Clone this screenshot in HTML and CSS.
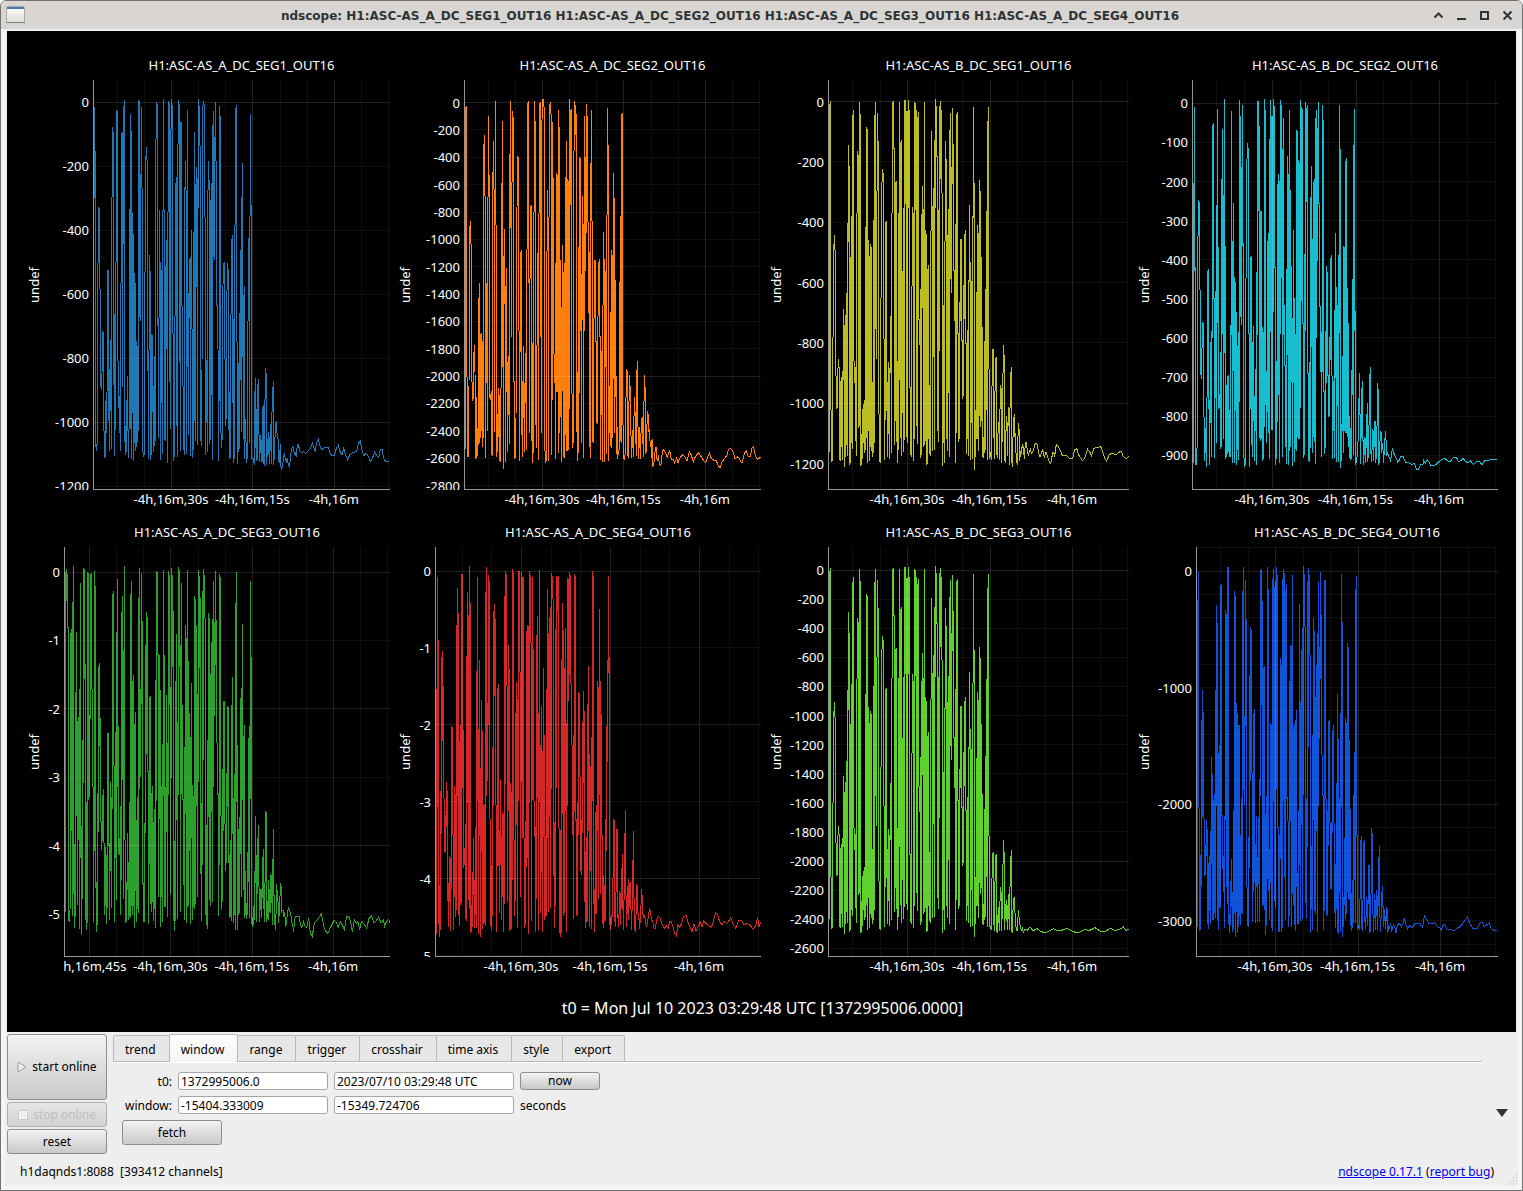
FILE: index.html
```html
<!DOCTYPE html>
<html lang="en">
<head>
<meta charset="UTF-8" />
<meta name="viewport" content="width=device-width, initial-scale=1" />
<title>ndscope</title>
<link rel="stylesheet" href="styles.css">
</head>
<body>
<div class="window">
  <header class="titlebar">
    <svg class="app-icon" width="22" height="20" viewBox="0 0 22 20">
      <defs>
        <linearGradient id="sheet" x1="0" y1="0" x2="0" y2="1">
          <stop offset="0" stop-color="#fff" />
          <stop offset="1" stop-color="#dcdeda" />
        </linearGradient>
      </defs>
      <rect x="1.5" y="1.5" width="18" height="16" rx="1" fill="url(#sheet)" stroke="#a9aaa6" />
      <rect x="1" y="17" width="19" height="1" fill="#7f807c" />
      <rect x="2" y="2" width="17" height="2" fill="#5078b0" />
    </svg>
    <h1>ndscope: H1:ASC-AS_A_DC_SEG1_OUT16 H1:ASC-AS_A_DC_SEG2_OUT16 H1:ASC-AS_A_DC_SEG3_OUT16 H1:ASC-AS_A_DC_SEG4_OUT16</h1>
    <div class="window-buttons">
      <button aria-label="Shade"><svg width="11" height="11" viewBox="0 0 11 11"><path d="M1.5 7.5L5.500 3.500L9.500 7.500" /></svg></button>
      <button aria-label="Minimize"><svg width="11" height="11" viewBox="0 0 11 11"><path d="M1 9H10" /></svg></button>
      <button aria-label="Maximize"><svg width="11" height="11" viewBox="0 0 11 11"><path d="M2 2H9V9H2Z" /></svg></button>
      <button aria-label="Close"><svg width="11" height="11" viewBox="0 0 11 11"><path d="M1.500 1.500L9.500 9.500M9.500 1.500L1.500 9.500" /></svg></button>
    </div>
  </header>

  <main class="scope">
    <div class="plots" id="plots"></div>
    <p class="t0">t0 = Mon Jul 10 2023 03:29:48 UTC [1372995006.0000]</p>
  </main>

  <section class="controls">
    <div class="run-buttons">
      <button class="btn start"><svg width="10" height="12" viewBox="0 0 10 12"><path d="M1 1L9 6L1 11Z" fill="#eee" stroke="#a0a0a0" /></svg>start online</button>
      <button class="btn" disabled><svg width="10" height="10" viewBox="0 0 10 10"><rect x="1" y="1" width="8" height="8" fill="#eee" stroke="#f8f8f8" stroke-width="2" /><path d="M.5 9.500V.5H9.500V9.500Z" fill="none" stroke="#c8c8c8" /></svg>stop online</button>
      <button class="btn">reset</button>
    </div>

    <div class="panel">
      <nav class="tabs">
        <button>trend</button>
        <button class="active">window</button>
        <button>range</button>
        <button>trigger</button>
        <button>crosshair</button>
        <button>time axis</button>
        <button>style</button>
        <button>export</button>
      </nav>
      <form class="window-form" onsubmit="return false">
        <label for="t0Gps">t0:</label>
        <input type="text" id="t0Gps" value="1372995006.0" />
        <input type="text" id="t0Date" aria-label="t0 date" value="2023/07/10 03:29:48 UTC" />
        <button type="button" class="btn">now</button>

        <label for="winStart">window:</label>
        <input type="text" id="winStart" value="-15404.333009" />
        <input type="text" id="winEnd" aria-label="window end" value="-15349.724706" />
        <span>seconds</span>
      </form>
      <button class="btn fetch">fetch</button>
    </div>

    <button class="collapse" aria-label="Hide controls"><svg width="12" height="8" viewBox="0 0 12 8"><path d="M0 0H12L6 8Z" fill="#2e3436" /></svg></button>
  </section>

  <footer class="statusbar">
    <span class="server">h1daqnds1:8088&nbsp; [393412 channels]</span>
    <span><a href="#">ndscope 0.17.1</a> (<a href="#">report bug</a>)</span>
    <svg class="grip" width="12" height="12" viewBox="0 0 12 12"><path d="M10 1h1M7 4h1M10 4h1M4 7h1M7 7h1M10 7h1M1 10h1M4 10h1M7 10h1M10 10h1" stroke="#b4b4b4" /></svg>
  </footer>
</div>
<script src="scope.js"></script>
</body>
</html>
```
FILE: styles.css
```css
* {
  box-sizing: border-box;
}
body {
  margin: 0;
  background: #fff;
  font-family: "Noto Sans", sans-serif;
  font-size: 12px;
  line-height: 16px;
  color: #000;
}
button,
input {
  font: inherit;
  color: inherit;
}
.window {
  min-height: 100vh;
  display: flex;
  flex-direction: column;
  border: 1px solid #757371;
  border-radius: 6px 6px 0 0;
  background: #eee;
  box-shadow: inset 0 0 0 4px #f6f5f4;
}

/* title bar */
.titlebar {
  height: 28px;
  display: flex;
  align-items: center;
  padding: 0 9px 0 4px;
  background: #d9d5d2;
  border-radius: 5px 5px 0 0;
}
.titlebar h1 {
  flex: 1;
  margin: 0;
  padding-top: 2px;
  font-family: "DejaVu Sans", sans-serif;
  font-size: 12px;
  font-weight: 700;
  text-align: center;
  white-space: nowrap;
  color: #2e3436;
}
.window-buttons {
  display: flex;
  gap: 12px;
}
.window-buttons button {
  display: flex;
  padding: 0;
  border: none;
  background: none;
}
.window-buttons path {
  fill: none;
  stroke: #2e3436;
  stroke-width: 2;
}

/* plots */
.scope {
  flex: 1;
  display: flex;
  flex-direction: column;
  margin: 2px 6px 0;
  padding: 26px 18px 0 20px;
  background: #000;
  color: #fff;
}
.plots {
  flex: 1;
  display: grid;
  grid-template-columns: 363fr 363fr 360fr 361fr;
  grid-template-rows: 1fr 1fr;
  gap: 12px 8px;
}
.plot {
  display: grid;
  grid-template-columns: auto 1fr;
  grid-template-rows: 23px 1fr 22px;
  min-width: 0;
  margin: 0;
  font-size: 13px;
  line-height: 18px;
}
.plot figcaption {
  grid-column: 2;
  line-height: 16px;
  text-align: center;
  white-space: nowrap;
}
.yaxis {
  position: relative;
  grid-column: 1;
  overflow: hidden;
}
.yaxis .unit {
  position: absolute;
  left: 0;
  top: 50%;
  line-height: 14px;
  writing-mode: vertical-rl;
  transform: translateY(-50%) rotate(180deg);
}
.yaxis .tick {
  position: absolute;
  right: 4px;
  transform: translateY(-50%);
}
.xaxis {
  position: relative;
  grid-column: 2;
  overflow: hidden;
}
.xaxis .tick {
  position: absolute;
  top: 0;
  transform: translateX(-50%);
  white-space: nowrap;
}
.canvas {
  position: relative;
  grid-column: 2;
}
.canvas svg {
  position: absolute;
  width: 100%;
  height: 100%;
}
.canvas path {
  fill: none;
  stroke-width: 1px;
  vector-effect: non-scaling-stroke;
  shape-rendering: crispEdges;
}
.grid-minor {
  stroke: rgba(255, 255, 255, 0.06);
}
.grid-major {
  stroke: rgba(255, 255, 255, 0.13);
}
.axis-line {
  stroke: #969696;
}
.t0 {
  margin: 0;
  padding: 17px 0 12px;
  font-size: 16px;
  line-height: 24px;
  text-align: center;
}

/* controls */
.controls {
  display: flex;
  padding: 2px 0 1px 6px;
}
.btn {
  display: flex;
  align-items: center;
  justify-content: center;
  padding: 0;
  border: 1px solid #8e8e8e;
  border-radius: 3px;
  background: linear-gradient(#f2f2f2, #c9c9c9);
}
.btn:disabled {
  border-color: #b0b0b0;
  color: #bebebe;
  background: linear-gradient(#e6e6e6, #d2d2d2);
}
.run-buttons {
  display: flex;
  flex-direction: column;
  gap: 2px;
  width: 100px;
}
.run-buttons .btn {
  height: 25px;
  gap: 5px;
}
.run-buttons .start {
  height: 66px;
}
.panel {
  flex: 1;
  margin-left: 6px;
}
.tabs {
  display: flex;
  align-items: flex-end;
  height: 28px;
  border-bottom: 1px solid #b9b9b9;
  box-shadow: 0 1px #fff;
}
.tabs button {
  height: 26px;
  margin-left: -1px;
  padding: 2px 13px 0 11px;
  border: 1px solid #b9b9b9;
  border-bottom: none;
  border-radius: 2px 2px 0 0;
  background: #e7e7e7;
}
.tabs button:first-child {
  margin-left: 0;
}
.tabs .active {
  height: 28px;
  margin-bottom: -1px;
  background: linear-gradient(#fff, #f4f4f4);
}
.window-form {
  display: grid;
  grid-template-columns: 59px 150px 180px 80px;
  gap: 6px;
  margin-top: 10px;
  line-height: 20px;
}
.window-form label {
  height: 18px;
  text-align: right;
}
.window-form input {
  width: 100%;
  height: 18px;
  padding: 1px 2px 0;
  border: 1px solid #a6a6a6;
  border-radius: 3px;
  background: #fff;
}
.window-form span {
  height: 18px;
}
.window-form .btn {
  height: 18px;
}
.fetch {
  width: 100px;
  height: 25px;
  margin: 6px 0 0 9px;
}
.collapse {
  align-self: flex-end;
  display: flex;
  align-items: center;
  width: 40px;
  height: 82px;
  padding: 0 14px;
  border: none;
  background: none;
}

/* status bar */
.statusbar {
  position: relative;
  display: flex;
  justify-content: space-between;
  padding: 9px 28px 10px 19px;
}
.statusbar a {
  color: #0000ee;
}
.grip {
  position: absolute;
  right: 4px;
  bottom: 4px;
}
```
FILE: scope.js
```js
// each trace is a list of x,y points on a grid with 3 units per pixel
// view: left and top of that grid, then its width
const HEIGHT = 1230;

const bodySegB = '118,1115 118,94 121,64 122,905 125,1145 127,1138 128,1020 130,548 133,466 136,532 137,834 140,984 143,980 143,895 145,838 148,874 149,1140 152,904 152,1142 155,892 155,1100 158,874 158,1140 160,688 163,756 163,1160 166,706 166,1130 169,690 169,1095 172,430 172,1127 175,196 178,286 178,1155 181,1145 181,535 184,528 184,1090 187,106 187,1106 190,91 191,774 193,908 196,862 196,990 199,1127 199,802 202,214 205,232 205,1043 208,67 208,1037 211,102 211,1157 214,1154 214,1062 217,1136 217,1020 220,972 220,1090 223,960 223,1118 226,934 226,1110 229,142 229,1074 232,148 232,1148 235,481 235,1052 238,528 238,1142 241,493 241,1100 244,502 244,1112 247,906 247,1130 250,898 250,1120 253,106 253,1090 256,67 256,748 259,520 259,838 262,100 265,222 265,1000 268,1003 268,1139 271,1148 272,954 274,390 277,268 280,286 280,776 283,778 283,1139 286,962 286,433 289,424 289,992 292,906 292,1130 295,847 295,1061 298,864 298,1136 301,760 304,684 304,1118 307,67 310,66 310,204 313,206 313,1094 316,306 316,1022 319,303 319,1085 322,844 322,1148 325,865 325,1109 328,67 328,900 331,186 331,1073 334,180 334,1127 337,572 337,1000 340,592 340,1115 343,60 343,1079 346,61 349,110 349,1070 352,94 352,1088 355,61 355,94 358,92 358,922 361,924 361,1124 364,915 364,1130 367,381 370,424 370,1142 373,67 373,1076 376,68 376,120 379,90 379,1038 382,110 382,1092 385,97 385,718 388,718 388,794 391,796 391,1133 394,403 394,1124 397,319 397,684 400,433 400,1100 403,67 403,1096 406,451 406,1082 409,463 409,1154 412,568 412,1151 415,556 415,1076 418,916 418,1121 421,904 421,1127 424,154 427,487 427,1112 430,325 430,832 433,180 433,1109 436,58 436,182 439,78 439,230 442,230 442,1054 445,820 445,1085 448,78 448,812 451,64 451,196 454,91 454,338 457,340 457,1157 460,936 460,1088 463,484 463,1148 466,184 466,484 469,238 469,1076 472,464 472,1112 475,388 475,940 478,150 478,1130 481,100 481,598 484,312 484,638 487,84 487,312 490,192 490,570 493,572 493,722 496,724 496,1148 499,102 499,1058 502,97 502,760 505,762 505,1085 508,726 508,1078 511,478 511,724 514,476 514,780 517,782 517,956 520,714 520,948 523,463 523,716 526,450 526,790 529,792 529,1121 532,970 532,1076 535,600 535,1127 538,375 538,600 541,547 541,1139 544,766 544,1028 547,408 547,1136 550,82 550,408 553,310 553,1169 556,1060 556,1130 559,924 559,1076 562,436 562,1078 565,460 565,1112 568,301 568,1008 571,334 571,1040 574,532 574,1022 577,742 577,1130 580,1070 580,1133 583,1103 583,1120 586,628 586,1110 589,518 589,990 592,124 592,1139 595,82 595,866 598,868 598,1136 ';

const plots = [
  {
    title: 'H1:ASC-AS_A_DC_SEG1_OUT16', color: '#1f77b4', axis: 66,
    view: [99, 0, 891], x: [78, 81.4, ['-4h,16m,30s', '-4h,16m,15s', '-4h,16m']],
    y: { zero: 22, step: 64, unit: -200, count: 7, major: 5 },
    trace: '101,668 103,80 106,273 106,1076 109,1112 112,1085 113,640 116,381 119,388 120,626 121,900 124,930 126,880 128,756 130,757 131,1008 134,1132 137,1130 137,963 139,1060 141,942 144,571 146,1022 149,867 149,1112 152,780 154,1108 155,588 157,141 160,162 161,914 163,702 163,1128 166,620 167,1050 169,90 173,98 173,768 176,985 178,948 181,1112 182,855 185,162 187,155 188,920 190,114 193,60 194,1067 197,1124 199,960 200,1115 202,888 205,1133 208,1007 211,102 212,1046 214,153 214,1136 217,400 218,1000 220,462 220,1142 223,578 223,1090 226,609 226,1112 229,783 229,1100 232,798 232,1085 235,1040 235,60 238,66 239,700 241,722 244,80 247,441 247,1086 250,1130 253,1124 254,750 257,258 259,201 262,258 263,872 266,848 266,1136 268,525 271,594 271,1139 275,762 275,1124 278,765 280,1115 283,828 283,1098 286,1076 287,237 290,66 292,76 293,558 296,1073 298,390 301,618 301,1139 304,748 304,970 307,390 307,1122 310,58 313,552 313,1076 316,1082 317,648 319,480 319,806 322,513 322,1148 325,64 328,70 329,752 331,1048 331,336 334,57 337,84 338,356 340,1142 343,1062 344,1130 346,342 349,291 349,850 352,1130 353,342 355,60 358,76 359,560 361,1112 363,126 364,675 367,680 368,824 371,1094 373,1125 373,484 376,243 379,370 379,1122 382,90 382,860 385,640 385,1065 388,552 391,530 391,1127 394,450 397,888 397,1134 400,978 400,1110 403,155 403,1022 406,312 406,1082 409,261 409,622 412,294 412,1095 415,57 418,87 421,250 421,1055 424,1098 426,905 427,100 430,63 433,75 433,410 436,412 436,1124 439,840 442,1115 442,520 445,243 448,327 448,1091 451,360 451,1080 454,309 454,945 457,135 457,1139 460,93 460,530 463,170 463,540 466,66 469,327 469,675 472,676 475,870 475,1142 478,880 478,78 481,122 481,968 484,1104 487,1070 488,685 490,550 493,549 493,600 496,950 496,1037 499,1008 500,718 502,549 505,577 505,1050 508,936 508,1136 511,908 511,1134 514,503 517,465 517,970 520,716 520,1148 523,700 523,1137 526,107 529,75 529,785 532,787 532,1151 535,849 535,1115 538,835 538,1107 541,510 541,900 544,350 544,1055 547,249 547,830 550,645 550,1076 553,618 553,1137 556,1017 559,1118 559,1148 562,1130 562,972 565,606 568,412 568,1088 571,102 574,504 574,1137 577,1136 580,1136 583,1154 583,1012 586,894 586,1014 589,1144 592,912 592,1139 595,897 598,1145 601,1064 604,1145 604,1080 607,1145 607,996 610,976 610,1142 613,1157 616,864 619,888 619,1154 622,1120 625,1056 628,1151 631,1032 634,1151 634,1074 637,960 640,903 640,1154 643,1130 643,1140 646,1040 649,1022 652,1075 655,1078 655,1142 658,1145 661,1092 661,1150 664,1168 667,1160 670,1140 673,1120 676,1135 679,1145 682,1133 685,1155 688,1160 691,1140 694,1110 697,1100 700,1103 703,1123 706,1120 709,1130 712,1093 716,1095 718,1110 724,1118 730,1115 736,1120 742,1115 748,1110 754,1100 757,1090 760,1098 766,1117 769,1090 775,1078 778,1090 784,1110 790,1105 796,1102 805,1103 811,1122 817,1127 823,1126 829,1105 835,1096 841,1118 846,1125 851,1105 857,1125 863,1139 869,1125 878,1117 890,1115 895,1090 901,1084 905,1105 911,1127 919,1120 926,1130 931,1145 937,1135 944,1117 952,1130 956,1132 961,1110 966,1107 971,1135 976,1143 986,1144'
  },
  {
    title: 'H1:ASC-AS_A_DC_SEG2_OUT16', color: '#ff7f0e', axis: 66,
    view: [102, 0, 891], x: [78, 81.4, ['-4h,16m,30s', '-4h,16m,15s', '-4h,16m']],
    y: { zero: 22.6, step: 27.35, unit: -200, count: 15, major: 10 },
    trace: '106,1108 107,82 110,80 111,890 112,1130 115,1130 117,940 118,468 121,424 124,526 125,842 127,962 130,955 131,838 133,796 135,876 137,1136 139,1130 140,950 142,1127 144,1112 146,700 148,609 150,1088 151,774 154,758 155,1052 157,784 157,1100 160,1060 161,220 163,166 166,436 166,1133 169,608 172,1052 173,618 175,108 178,370 179,948 181,960 184,932 184,1120 187,1127 188,380 190,184 193,396 193,1055 196,64 199,610 200,1130 203,1092 205,925 208,1142 208,945 211,1010 212,1145 215,520 217,124 217,860 220,528 220,1168 223,448 226,700 226,1145 229,564 232,1115 232,880 235,828 238,1091 239,400 241,64 243,444 244,770 247,94 250,118 250,904 253,906 255,1136 258,1025 260,460 263,231 266,235 266,546 269,1142 271,532 274,510 274,928 277,1130 280,798 283,1115 284,956 287,820 289,1109 290,750 293,76 295,64 296,146 298,1060 301,381 304,378 304,1082 307,790 307,1148 310,804 310,1120 313,64 316,150 316,1034 319,960 320,1103 322,519 325,552 325,1139 328,72 331,66 331,180 334,1058 335,182 337,60 340,58 343,92 343,1036 346,1148 349,1139 350,720 352,330 355,450 355,1142 358,76 361,70 364,118 364,1124 367,126 367,960 370,294 372,822 376,936 376,1136 379,280 379,936 382,284 382,936 385,90 385,1120 388,142 388,1058 391,540 391,1010 394,680 394,1145 397,496 397,932 400,576 400,1130 403,966 403,1133 406,291 406,1066 409,184 409,1112 412,298 412,1112 415,303 415,1109 418,58 418,988 421,90 421,150 424,88 425,768 427,1103 430,1080 431,386 433,64 436,82 436,166 439,102 439,1055 442,876 442,1142 445,897 445,1118 448,232 448,940 451,234 451,752 454,720 454,1088 457,348 457,720 460,490 460,1133 463,108 463,752 466,326 466,574 469,72 469,458 472,108 475,576 475,698 478,700 478,1100 481,250 481,1133 484,90 487,578 487,1085 490,880 490,1088 493,541 496,541 496,784 499,786 499,1028 502,1030 505,560 508,538 508,768 511,770 511,1139 514,942 517,754 517,1145 520,456 523,576 523,1145 526,728 529,502 529,1121 532,84 535,246 535,1142 538,1020 541,870 541,1098 544,510 544,1103 547,540 547,1073 550,280 550,898 553,354 553,1058 556,600 556,952 559,888 559,1121 562,1040 562,1136 565,1118 568,1105 568,622 571,598 571,1082 574,102 574,1090 577,100 577,1034 580,1036 580,1130 583,1139 586,1120 589,870 592,874 592,1118 595,1133 598,886 601,934 604,1133 607,1070 607,1050 610,1130 613,952 616,1016 619,1127 619,924 622,844 625,1136 628,1040 631,1136 634,1022 637,1010 640,1130 643,886 646,938 646,1121 649,1112 652,994 655,1006 655,1055 658,1048 661,1100 664,1080 664,1133 667,1078 667,1160 670,1155 673,1140 676,1103 679,1103 679,1130 682,1140 685,1132 688,1150 691,1157 694,1150 697,1115 700,1108 706,1118 712,1132 718,1112 721,1120 724,1140 730,1138 734,1148 740,1135 744,1148 752,1130 758,1125 765,1130 771,1143 778,1115 784,1125 790,1147 796,1130 805,1118 812,1128 820,1140 827,1148 833,1130 838,1120 844,1135 850,1140 858,1140 864,1155 870,1163 876,1145 884,1135 890,1127 896,1108 902,1105 909,1115 915,1136 924,1130 930,1140 936,1150 943,1120 949,1113 955,1130 961,1130 966,1103 971,1100 976,1128 983,1138 992,1132'
  },
  {
    title: 'H1:ASC-AS_B_DC_SEG1_OUT16', color: '#bcbd22', axis: 59,
    view: [114, 0, 903], x: [79, 82.5, ['-4h,16m,30s', '-4h,16m,15s', '-4h,16m']],
    y: { zero: 21.5, step: 60.35, unit: -200, count: 7, major: 5 },
    trace: bodySegB + '601,1115 604,1139 607,812 610,806 610,1070 613,1076 613,1136 616,838 619,835 619,1106 622,1133 625,1025 628,1066 628,1139 631,916 634,928 634,1148 637,1055 640,794 643,838 643,1142 646,1050 646,1148 649,1008 652,1072 652,1127 655,980 658,1064 658,1154 661,906 664,862 664,1148 667,1106 667,1160 670,1028 673,1003 673,1070 676,1060 679,1145 682,1150 685,1028 688,1055 688,1142 691,1112 691,1130 694,1118 697,1095 700,1100 703,1138 706,1088 709,1088 712,1110 715,1128 721,1105 724,1120 730,1112 736,1090 742,1092 746,1120 750,1132 755,1115 758,1110 763,1132 768,1115 773,1130 778,1145 782,1150 786,1130 789,1115 794,1128 799,1093 805,1100 811,1112 817,1126 830,1127 838,1136 848,1135 853,1110 860,1105 866,1125 878,1142 884,1135 893,1108 899,1115 904,1127 912,1105 920,1102 932,1100 938,1115 944,1135 950,1143 957,1125 965,1120 978,1124 990,1115 995,1115 1000,1130 1008,1137 1016,1130'
  },
  {
    title: 'H1:ASC-AS_B_DC_SEG2_OUT16', color: '#17becf', axis: 55,
    view: [126, 0, 918], x: [80, 83.5, ['-4h,16m,30s', '-4h,16m,15s', '-4h,16m']],
    y: { zero: 23.3, step: 39.1, unit: -100, count: 10, major: 10 },
    trace: '131,310 131,1148 133,80 134,560 137,564 137,1154 140,1154 142,1060 143,525 146,361 149,378 149,630 152,632 152,878 155,898 155,845 158,726 161,732 161,1010 164,1012 164,1142 167,1075 170,990 170,1160 173,574 176,570 176,988 179,960 179,1154 182,804 185,752 185,1130 188,138 191,130 191,655 194,656 194,1133 197,634 197,920 200,374 200,1088 203,88 203,500 206,504 206,986 209,942 209,985 212,944 212,1106 215,298 215,1100 218,147 218,346 221,348 221,1076 224,58 224,820 227,498 227,1136 230,915 230,1130 233,887 233,1121 236,886 236,1115 239,1010 239,1130 242,736 242,1130 245,94 245,735 248,484 248,1148 251,370 251,696 254,592 254,1150 257,606 257,994 260,697 260,1154 263,798 263,1109 266,852 266,1139 269,61 269,966 272,108 272,712 275,262 275,735 278,76 278,488 281,490 281,1118 284,1160 287,1148 287,774 290,262 293,190 296,228 296,760 299,762 299,1160 302,531 302,988 305,528 305,1094 308,786 308,1130 311,738 311,1024 314,948 314,1142 317,868 317,1052 320,576 320,1154 323,64 323,576 326,64 326,138 329,138 329,1073 332,394 332,1082 335,394 335,1078 338,742 338,1142 341,756 341,1136 344,58 344,1042 347,91 347,974 350,976 350,1088 353,484 353,996 356,460 356,1058 359,178 359,1136 362,61 362,178 365,108 365,1051 368,108 368,1050 371,58 371,108 374,78 374,562 377,564 377,1154 380,1026 380,1136 383,312 383,1026 386,283 386,944 389,304 389,1148 392,60 392,304 395,76 395,594 398,208 398,1130 401,114 401,676 404,678 404,856 407,858 407,1100 410,568 410,1151 413,229 413,568 416,283 416,1154 419,91 419,1112 422,331 422,1100 425,558 425,892 428,714 428,1157 431,451 431,714 434,654 434,1145 437,984 437,1106 440,151 440,1112 443,153 443,1070 446,240 446,1076 449,249 449,1078 452,61 452,985 455,80 455,124 458,88 458,730 461,732 461,1133 464,522 464,1124 467,67 467,520 470,85 470,134 473,76 473,880 476,882 476,1142 479,847 479,1145 482,352 482,1103 485,259 485,476 488,478 488,1118 491,306 491,1070 494,298 494,1085 497,115 497,1151 500,91 500,538 503,145 503,542 506,67 506,370 509,370 509,678 512,678 512,876 515,878 515,1130 518,76 518,876 521,120 521,934 524,936 524,1121 527,754 527,1103 530,558 530,754 533,576 533,886 536,888 536,1010 539,772 539,1008 542,534 542,770 545,526 545,888 548,890 548,1136 551,904 551,1050 554,690 554,1133 557,460 557,690 560,622 560,1145 563,676 563,968 566,526 566,1145 569,76 569,526 572,208 572,1163 575,1052 575,1142 578,828 578,1052 581,499 581,1118 584,502 584,1052 587,243 587,1058 590,235 590,1058 593,624 593,1070 596,730 596,1100 599,1008 599,1133 602,1108 602,1139 605,870 605,1136 608,598 608,868 611,196 611,1124 614,88 614,692 617,694 617,1154 620,1140 623,1112 623,1130 626,994 629,880 629,1003 632,1004 632,1151 635,936 638,904 638,1080 641,1080 641,1154 644,1072 647,1078 647,1148 650,1020 653,970 653,1145 656,1112 659,892 662,862 662,1109 665,1146 668,1048 671,1064 671,1142 674,1024 677,1024 677,1150 680,1110 683,910 686,960 686,1154 689,1138 689,1100 692,1052 695,1064 695,1118 698,1090 701,1148 704,1086 707,1054 710,1128 713,1120 719,1135 722,1142 727,1108 731,1118 737,1132 743,1145 748,1140 752,1130 760,1130 766,1147 775,1147 785,1154 793,1150 799,1168 805,1168 812,1154 820,1152 821,1141 826,1150 832,1140 838,1148 842,1157 850,1158 858,1153 866,1145 874,1140 884,1135 893,1143 900,1145 910,1132 920,1133 925,1145 932,1142 939,1135 947,1145 955,1148 962,1143 970,1153 979,1146 987,1143 996,1154 1003,1143 1014,1142 1022,1138 1040,1138'
  },
  {
    title: 'H1:ASC-AS_A_DC_SEG3_OUT16', color: '#2ca02c', axis: 37,
    view: [132, 81, 978], x: [25, 81.4, ['-4h,16m,45s', '-4h,16m,30s', '-4h,16m,15s', '-4h,16m']],
    y: { zero: 25, step: 68.4, unit: -1, count: 6, major: 2 },
    trace: '137,1175 137,162 140,147 140,244 143,162 143,322 146,325 146,1202 149,1204 152,1103 152,348 155,327 155,932 158,246 158,1187 161,138 161,1120 164,1122 164,1223 167,516 167,1190 170,336 170,602 173,604 173,1154 176,592 176,960 179,508 179,1226 182,189 182,1014 185,918 185,1244 188,660 188,1136 191,144 191,658 194,148 194,432 197,432 197,1200 200,990 200,1229 203,156 203,1208 206,160 206,720 209,586 209,832 212,162 212,584 215,160 215,506 218,508 218,800 221,802 221,1205 224,153 224,992 227,198 227,1102 230,1105 230,1235 233,820 233,1216 236,438 236,818 239,430 239,594 242,596 242,904 245,906 245,990 248,826 248,962 251,808 251,968 254,970 254,1184 257,980 257,1157 260,1006 260,1211 263,640 263,1163 266,640 266,970 269,972 269,1199 272,786 272,1013 275,868 275,1163 278,222 278,866 281,213 281,738 284,740 284,1205 287,636 287,1013 290,336 290,1139 293,178 293,618 296,620 296,1002 299,954 299,1004 302,986 302,1184 305,276 305,1079 308,228 308,674 311,390 311,1136 314,138 314,960 317,962 317,1208 320,1085 320,1205 323,940 323,1085 326,1026 326,1199 329,1038 329,1187 332,222 332,1193 335,184 335,1157 338,484 338,1184 341,466 341,1157 344,612 344,1223 347,576 347,1112 350,900 350,1205 353,858 353,1166 356,234 356,1178 359,144 359,626 362,506 362,770 365,160 365,506 368,304 368,1091 371,1092 371,1205 374,942 374,1205 377,376 377,940 380,276 380,376 383,290 383,755 386,756 386,1211 389,530 389,1031 392,528 392,1151 395,820 395,1175 398,798 398,1145 401,906 401,1202 404,867 404,1166 407,480 407,1223 410,153 410,480 413,156 413,404 416,405 416,1130 419,406 419,896 422,510 422,1220 425,798 425,1130 428,672 428,1205 431,151 431,672 434,406 434,1160 437,800 437,1160 440,525 440,800 443,670 443,1190 446,154 446,766 449,166 449,500 452,502 452,1121 455,144 455,594 458,165 458,272 461,274 461,1202 464,1108 464,1232 467,484 467,1202 470,343 470,716 473,606 473,1196 476,141 476,600 479,150 479,376 482,378 482,1175 485,188 485,572 488,556 488,838 491,840 491,1094 494,680 494,1199 497,316 497,678 500,354 500,1208 503,150 503,1160 506,422 506,1157 509,580 509,992 512,652 512,1211 515,490 515,795 518,796 518,1199 521,1000 521,1160 524,228 524,1166 527,237 527,1151 530,318 530,776 533,522 533,1130 536,150 536,594 539,168 539,234 542,236 542,1061 545,1036 545,1202 548,212 548,1034 551,148 551,222 554,165 554,294 557,296 557,1184 560,916 560,1214 563,660 563,1226 566,280 566,660 569,294 569,1139 572,462 572,1157 575,366 575,860 578,298 578,1145 581,184 581,530 584,306 584,588 587,153 587,306 590,300 590,668 593,670 593,822 596,822 596,1187 599,162 599,1034 602,172 602,888 605,890 605,1169 608,748 608,1145 611,543 611,748 614,544 614,912 617,914 617,1052 620,758 620,1030 623,558 623,756 626,562 626,1028 629,1004 629,1193 632,960 632,1190 635,556 635,1202 638,472 638,880 641,834 641,1210 644,762 644,1184 647,250 647,1229 650,156 650,676 653,676 653,1229 656,928 656,1184 659,892 659,1178 662,534 662,1002 665,504 665,1130 668,312 668,702 671,648 671,1109 674,614 674,1193 677,1053 677,1184 680,1150 680,1196 683,1088 683,1184 686,654 686,1085 689,618 689,1193 692,183 692,618 695,411 695,1211 698,1190 698,1220 701,1178 701,1214 704,1053 704,1200 707,888 707,1052 710,1004 710,1205 713,976 716,915 716,1100 719,1102 719,1205 722,1106 725,1114 725,1193 728,1026 731,986 731,1166 734,1166 734,1205 737,873 740,882 740,1205 743,1178 746,1080 746,1200 749,1130 752,1062 752,1178 755,1094 758,1016 758,1214 761,928 761,1127 764,1128 764,1205 767,1229 770,1092 773,1142 776,1156 776,1210 779,1150 782,1090 785,1114 785,1175 789,1170 791,1190 794,1175 797,1222 800,1200 803,1175 806,1162 809,1175 812,1178 815,1205 818,1215 821,1235 824,1195 828,1188 834,1188 838,1190 841,1215 846,1222 851,1205 855,1218 860,1222 865,1198 868,1205 871,1240 877,1250 881,1220 885,1205 892,1200 898,1190 904,1182 908,1200 913,1225 918,1235 924,1240 930,1225 938,1210 942,1200 948,1205 955,1222 960,1205 967,1215 973,1228 980,1190 986,1190 992,1205 997,1235 1003,1200 1010,1210 1014,1205 1019,1230 1024,1205 1031,1210 1040,1225 1047,1195 1055,1187 1062,1210 1070,1200 1076,1190 1083,1210 1090,1200 1094,1218 1099,1205 1106,1198 1110,1208'
  },
  {
    title: 'H1:ASC-AS_A_DC_SEG4_OUT16', color: '#d62728', axis: 37,
    view: [105, 81, 978], x: [86, 89, ['-4h,16m,30s', '-4h,16m,15s', '-4h,16m']],
    y: { zero: 24, step: 76.9, unit: -1, count: 6, major: 2 },
    trace: '110,508 110,1241 113,171 113,508 116,360 116,1210 119,1213 119,1250 122,814 122,1229 125,412 125,812 128,393 128,500 131,498 131,836 134,838 134,998 137,886 137,996 140,786 140,884 143,814 143,1142 146,1090 146,1220 149,1008 149,1130 152,1096 152,1232 155,618 155,1106 158,620 158,942 161,942 161,1229 164,798 164,1130 167,822 167,1190 170,316 170,1169 173,205 173,594 176,280 176,1184 179,664 179,1217 182,614 182,1156 185,162 185,1150 188,163 188,630 191,632 191,1043 194,984 194,1034 197,984 197,1196 200,408 200,1202 203,216 203,408 206,286 206,1139 209,138 209,1166 212,250 212,1238 215,1154 215,1235 218,1056 218,1220 221,954 221,1083 224,1082 224,1223 227,1080 227,1184 230,454 230,1223 233,172 233,816 236,628 236,1241 239,421 239,744 242,744 242,1250 245,540 245,986 248,632 248,1226 251,856 251,1211 254,870 254,1208 257,216 257,1217 260,141 260,548 263,550 263,782 266,165 266,614 269,184 269,896 272,898 272,1217 275,1188 275,1229 278,680 278,1187 281,274 281,680 284,252 284,296 287,298 287,854 290,856 290,1235 293,504 293,1037 296,492 296,1037 299,930 299,1178 302,780 302,950 305,952 305,1199 308,876 308,1130 311,910 311,1235 314,228 314,1151 317,153 317,228 320,162 320,498 323,500 323,1145 326,376 326,836 329,448 329,1232 332,790 332,1229 335,816 335,1226 338,147 338,1079 341,156 341,960 344,962 344,1187 347,580 347,1142 350,487 350,916 353,538 353,1223 356,153 356,536 359,153 359,456 362,458 362,1130 365,156 365,774 368,171 368,954 371,172 371,954 374,956 374,1223 377,1042 377,1214 380,333 380,1040 383,316 383,1013 386,318 386,1241 389,153 389,318 392,166 392,366 395,370 395,1202 398,171 398,770 401,388 401,842 404,844 404,948 407,948 407,1235 410,346 410,1136 413,289 413,580 416,582 416,1229 419,150 419,808 422,676 422,1178 425,558 425,1055 428,694 428,1235 431,444 431,694 434,646 434,1199 437,1018 437,1190 440,508 440,1187 443,208 443,954 446,338 446,1175 449,292 449,892 452,260 452,1163 455,159 455,256 458,168 458,236 461,238 461,1066 464,1068 464,1223 467,328 467,1157 470,169 470,328 473,171 473,204 476,168 476,924 479,926 479,1238 482,930 482,1250 485,416 485,1238 488,250 488,416 491,331 491,1187 494,444 494,1180 497,324 497,712 500,610 500,1235 503,174 503,608 506,178 506,542 509,156 509,464 512,166 512,488 515,490 515,674 518,676 518,946 521,646 521,1196 524,162 524,876 527,168 527,900 530,898 530,1187 533,846 533,1184 536,517 536,846 539,522 539,770 542,772 542,1052 545,944 545,1066 548,606 548,940 551,514 551,602 554,574 554,1145 557,994 557,1223 560,952 560,1205 563,552 563,1205 566,438 566,702 569,704 569,1220 572,738 572,1052 575,650 575,1226 578,153 578,648 581,168 581,1151 584,1154 584,1235 587,876 587,1181 590,856 590,1181 593,484 593,856 596,502 596,1136 599,267 599,500 602,484 602,1121 605,582 605,946 608,948 608,1211 611,1066 611,1223 614,1174 614,1202 617,896 617,1199 620,618 620,894 623,420 623,618 626,168 626,420 629,411 629,1214 632,1190 632,1229 635,1187 638,1190 638,1168 641,900 644,904 644,1196 647,1220 650,928 653,930 653,1178 656,1220 659,1114 662,1130 662,1214 665,1068 668,1002 668,1140 671,1229 674,976 677,870 677,1074 680,1220 683,1110 686,1078 686,1200 689,1090 692,1088 692,1140 695,1230 698,1066 701,933 701,1082 704,1229 707,1235 710,1093 713,1104 713,1178 716,1184 719,1226 722,1180 725,1108 728,1152 728,1180 731,1190 734,1187 737,1210 740,1222 743,1205 746,1180 749,1165 752,1180 755,1200 758,1205 762,1225 766,1226 770,1200 775,1190 781,1195 787,1215 793,1225 799,1218 805,1225 808,1205 814,1205 819,1220 824,1240 830,1248 833,1215 840,1222 846,1205 850,1190 858,1186 863,1205 869,1220 876,1235 882,1212 888,1232 895,1220 901,1205 906,1220 911,1202 917,1210 924,1215 931,1222 938,1215 943,1190 947,1178 953,1185 959,1205 966,1215 972,1203 979,1210 985,1205 993,1193 1000,1215 1008,1225 1016,1200 1024,1200 1032,1215 1040,1210 1049,1215 1060,1228 1068,1215 1073,1192 1077,1220 1083,1205'
  },
  {
    title: 'H1:ASC-AS_B_DC_SEG3_OUT16', color: '#5ed12d', axis: 59,
    view: [114, 0, 903], x: [79, 82.5, ['-4h,16m,30s', '-4h,16m,15s', '-4h,16m']],
    y: { zero: 23, step: 29.1, unit: -200, count: 14, major: 10 },
    trace: bodySegB + '601,1140 604,1150 607,922 610,918 610,1100 613,1152 616,930 619,922 619,1150 622,1155 625,1080 628,1152 631,1020 634,1040 634,1152 637,1100 640,879 643,930 643,1150 646,1100 649,1060 652,1150 655,1040 658,1150 661,960 664,909 664,1150 667,1155 670,1060 673,1050 676,1120 679,1150 682,1150 685,1090 688,1120 691,1140 694,1150 697,1145 700,1155 706,1146 712,1150 720,1140 730,1152 740,1144 750,1152 765,1158 778,1152 790,1145 800,1150 815,1150 830,1144 842,1150 860,1158 872,1154 884,1148 900,1150 915,1142 930,1152 945,1154 960,1144 975,1150 988,1148 1000,1140 1008,1150 1016,1146'
  },
  {
    title: 'H1:ASC-AS_B_DC_SEG4_OUT16', color: '#1053d8', axis: 59,
    view: [168, 81, 906], x: [79, 82.5, ['-4h,16m,30s', '-4h,16m,15s', '-4h,16m']],
    y: { zero: 24, step: 116.6, unit: -1000, count: 4, major: 2, minors: 5 },
    trace: '173,240 173,1220 176,156 176,864 179,866 179,1232 182,1100 182,1230 185,600 185,1098 188,510 188,600 191,576 191,896 194,898 194,1067 197,974 197,1064 200,900 200,974 203,926 203,1211 206,1030 206,1226 209,1008 209,1172 212,932 212,1211 215,711 215,932 218,762 218,1199 221,840 221,1199 224,822 224,1178 227,510 227,1193 230,255 230,510 233,308 233,1199 236,698 236,1229 239,676 239,1160 242,195 242,1163 245,192 245,886 248,888 248,1046 251,1008 251,1115 254,900 254,1223 257,270 257,900 260,282 260,1100 263,141 263,1151 266,141 266,1211 269,1194 269,1238 272,1082 272,1217 275,1017 275,1160 278,1115 278,1235 281,1080 281,1226 284,213 284,1178 287,228 287,1250 290,549 290,1175 293,578 293,1238 296,615 296,1220 299,615 299,1187 302,945 302,1214 305,926 305,1178 308,213 308,1181 311,141 311,722 314,588 314,854 317,180 317,588 320,297 320,1100 323,1102 323,1217 326,1044 326,1220 329,466 329,1043 332,321 332,464 335,330 335,760 338,762 338,1205 341,578 341,1115 344,567 344,1085 347,972 347,1208 350,888 350,1100 353,1011 353,1205 356,892 356,1056 359,778 359,1205 362,150 362,776 365,147 365,242 368,244 368,1157 371,444 371,1154 374,438 374,1169 377,882 377,1244 380,897 380,1217 383,141 383,1076 386,207 386,1112 389,1090 389,1199 392,609 392,1090 395,615 395,1223 398,178 398,1232 401,147 401,200 404,202 404,1142 407,184 407,1163 410,141 410,182 413,165 413,922 416,924 416,1235 419,1018 419,1235 422,414 422,1016 425,435 425,1235 428,178 428,1223 431,147 431,178 434,159 434,1070 437,210 437,1199 440,192 440,830 443,832 443,902 446,904 446,1220 449,484 449,1187 452,375 452,658 455,378 455,1220 458,165 458,1121 461,621 461,1154 464,612 464,1214 467,600 467,1232 470,570 470,1100 473,1058 473,1214 476,1036 476,1211 479,252 479,1034 482,546 482,1202 485,390 485,832 488,324 488,1196 491,138 491,322 494,162 494,318 497,318 497,1148 500,984 500,1196 503,183 503,982 506,144 506,248 509,165 509,404 512,406 512,1238 515,978 515,1166 518,646 518,1229 521,294 521,644 524,333 524,1172 527,532 527,1181 530,435 530,932 533,338 533,1235 536,186 536,584 539,380 539,656 542,156 542,380 545,285 545,704 548,706 548,826 551,828 551,1229 554,180 554,1172 557,180 557,836 560,838 560,1187 563,872 563,1184 566,603 566,880 569,600 569,908 572,910 572,1106 575,906 575,1109 578,630 578,906 581,615 581,908 584,910 584,1178 587,1032 587,1223 590,789 590,1166 593,522 593,1235 596,656 596,1241 599,834 599,1118 602,578 602,1236 605,162 605,578 608,306 608,1250 611,1140 611,1220 614,966 614,1154 617,594 617,1196 620,609 620,1181 623,369 623,1115 626,381 626,1136 629,660 629,1139 632,868 632,1218 635,1118 635,1232 638,1205 638,1220 641,826 641,1208 644,696 644,1080 647,207 647,1208 650,168 650,946 653,945 653,1229 656,1215 659,1229 662,966 665,948 665,1223 668,1232 671,968 674,963 674,1196 677,1226 680,1131 683,1160 683,1217 686,1036 689,1038 689,1238 692,1230 695,924 698,963 698,1160 701,1235 704,1121 707,1176 707,1229 710,1110 713,1163 713,1229 716,1028 719,978 719,1172 722,1235 725,1126 728,1098 728,1154 731,1170 731,1220 734,1168 737,1226 740,1160 743,1180 743,1238 746,1220 749,1225 752,1208 755,1235 760,1215 764,1220 768,1238 772,1215 778,1210 784,1220 789,1208 793,1193 798,1215 803,1226 810,1215 816,1225 824,1210 832,1212 840,1208 843,1218 848,1222 853,1186 859,1195 866,1210 875,1212 884,1208 892,1220 898,1222 904,1230 910,1214 916,1215 922,1230 932,1228 942,1233 950,1225 958,1222 967,1212 975,1200 982,1192 990,1212 998,1225 1013,1224 1020,1208 1026,1206 1032,1220 1040,1215 1048,1208 1053,1225 1062,1231 1070,1231'
  }
];

function gridPaths(plot) {
  const [left, top, width] = plot.view;
  const [xFirst, xStep] = plot.x;
  const { zero, step, count, major, minors = 1 } = plot.y;
  let minor = '';
  let strong = '';

  for (let i = -4; i < 14; i++) {
    const x = Math.round(xFirst + i * xStep / 3) * 3 + 1.5;
    if (x < 3 || x > width) continue;
    const line = `M${left + x} ${top}V${top + HEIGHT}`;
    if (i % 3 === 0) strong += line; else minor += line;
  }
  for (let i = -(minors - 1); i < count * minors; i++) {
    const y = Math.round(zero + i * step / minors - 0.5) * 3 + 1.5;
    if (y < 0 || y > HEIGHT) continue;
    const line = `M${left} ${top + y}H${left + width}`;
    if (i % (major * minors) === 0) strong += line; else minor += line;
  }
  return [minor, strong];
}

function render(plot) {
  const [left, top, width] = plot.view;
  const [minor, strong] = gridPaths(plot);
  const [xFirst, xStep, xLabels] = plot.x;
  const { zero, step, unit, count } = plot.y;

  const yTicks = Array.from({ length: count }, (_, i) =>
    `<span class="tick" style="top:${(zero + i * step) * 300 / HEIGHT}%">${i * unit}</span>`).join('');
  const xTicks = xLabels.map((label, i) =>
    `<span class="tick" style="left:${(xFirst + i * xStep) * 300 / width}%">${label}</span>`).join('');

  return `<figure class="plot">
    <figcaption>${plot.title}</figcaption>
    <div class="yaxis" style="width:${plot.axis}px"><span class="unit">undef</span>${yTicks}</div>
    <div class="canvas">
      <svg viewBox="${left} ${top} ${width} ${HEIGHT}" preserveAspectRatio="none">
        <path d="M${plot.trace}" stroke="${plot.color}" />
        <path class="grid-minor" d="${minor}" />
        <path class="grid-major" d="${strong}" />
        <path class="axis-line" d="M${left + 1.5} ${top}V${top + HEIGHT - 1.5}H${left + width}" />
      </svg>
    </div>
    <div class="xaxis">${xTicks}</div>
  </figure>`;
}

document.getElementById('plots').innerHTML = plots.map(render).join('');
```
